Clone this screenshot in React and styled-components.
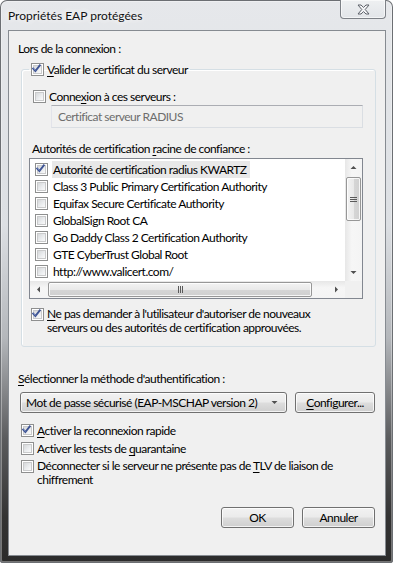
import React from "react";
import styled, { createGlobalStyle } from "styled-components";

const GlobalStyle = createGlobalStyle`
  html, body { margin: 0; padding: 0; background: #ffffff; }
  body {
    font-family: Lato, "Noto Sans", sans-serif;
    font-size: 12px;
    letter-spacing: -0.5px;
    color: #000;
  }
  u { text-decoration: underline; text-underline-offset: 2px; text-decoration-thickness: 1px; }
`;

// Window frame
const Window = styled.div`
  width: 393px;
  height: 563px;
  box-sizing: border-box;
  padding: 0 7px 7px 8px;
  border-radius: 7px 7px 3px 3px;
  background: linear-gradient(to bottom, #e6e8eb 0%, #dcdfe3 40%, #b4b7bb 60%, #5a5b5d 78%, #333 92%, #2b2b2b 100%);
  box-shadow: inset 0 0 0 1px #6c6f73, inset 0 0 0 2px rgba(255,255,255,0.35);
  display: flex;
  flex-direction: column;
`;

const TitleBar = styled.div`
  height: 30px;
  display: flex;
  align-items: flex-start;
`;

const Title = styled.div`
  padding-top: 8px;
  line-height: 15px;
  letter-spacing: 0;
  color: #111;
  text-shadow: 0 0 6px rgba(255,255,255,0.95), 0 0 10px rgba(255,255,255,0.8);
`;

const CloseButton = styled.div`
  margin-left: auto;
  width: 46px;
  height: 19px;
  box-sizing: border-box;
  border: 1px solid #7d8187;
  border-top: none;
  border-radius: 0 0 4px 4px;
  background: linear-gradient(to bottom, #eef0f2, #e2e5e9);
  box-shadow: inset 0 0 0 1px rgba(255,255,255,0.6);
  display: flex;
  align-items: center;
  justify-content: center;
`;

const Client = styled.div`
  flex: 1;
  background: #f0f0f0;
  border: 1px solid #868b91;
  display: flex;
  flex-direction: column;
`;

const Label = styled.div`
  line-height: 15px;
  margin: ${(p) => p.$m || "0"};
  white-space: nowrap;
`;

// Group box
const Group = styled.fieldset`
  margin: 6px 9px 0 12px;
  padding: 0 0 11px 0;
  border: 1px solid #d5dfe5;
  border-radius: 3px;
  box-shadow: inset 1px 1px 0 #fff;
  min-width: 0;
`;

const Legend = styled.legend`
  margin-left: 7px;
  padding: 0 2px;
`;

const CheckRow = styled.label`
  display: flex;
  align-items: ${(p) => (p.$multi ? "flex-start" : "center")};
  gap: 3px;
  line-height: ${(p) => (p.$multi ? "14px" : "15px")};
  margin: ${(p) => p.$m || "0"};
  white-space: nowrap;
`;

const Box = styled.span`
  flex: none;
  width: 13px;
  height: 13px;
  box-sizing: border-box;
  border: 1px solid #8e8f8f;
  background: #fff;
  padding: 1px;
  display: inline-flex;
  margin-top: ${(p) => (p.$multi ? "1px" : "0")};
  span {
    flex: 1;
    border: 1px solid #c9cacb;
    background: linear-gradient(135deg, #d6d8da 0%, #eceef0 60%, #fafafa 100%);
    position: relative;
  }
  svg { position: absolute; left: -3px; top: -3px; }
`;

const Check = ({ checked, multi }) => (
  <Box $multi={multi}>
    <span>
      {checked && (
        <svg width="11" height="11" viewBox="0 0 11 11">
          <path d="M2.2 5.6 L4.4 8 L8.8 2.3" fill="none" stroke="#3e5494" strokeWidth="1.9" strokeLinecap="square" />
          <path d="M2.5 5.4 L4.4 7.4" fill="none" stroke="#9fb2e3" strokeWidth="0.6" />
        </svg>
      )}
    </span>
  </Box>
);

const TextBox = styled.div`
  margin: 1px 12px 0 29px;
  height: 23px;
  box-sizing: border-box;
  border: 1px solid #dadee3;
  border-top-color: #abadb3;
  border-left-color: #e2e3ea;
  background: #f0f0f0;
  color: #6d6d6d;
  line-height: 21px;
  padding-left: 6px;
`;

// List box
const ListBox = styled.div`
  margin: 2px 12px 0 7px;
  height: 141px;
  box-sizing: border-box;
  border: 1px solid #828790;
  background: #fff;
  display: grid;
  grid-template-columns: 1fr 17px;
  grid-template-rows: 1fr 17px;
  overflow: hidden;
`;

const Rows = styled.div`
  padding: 2px 0 0 5px;
  overflow: hidden;
`;

const Item = styled.div`
  height: 17px;
  display: flex;
  align-items: center;
  gap: 4px;
  white-space: nowrap;
  span.txt {
    padding: 0 3px 0 1px;
    line-height: 17px;
    background: ${(p) => (p.$sel ? "#e8e8e8" : "transparent")};
  }
`;

const VScroll = styled.div`
  display: flex;
  flex-direction: column;
  background: linear-gradient(to right, #e7e7e7, #f6f6f6 40%, #f4f4f4);
`;

const HScroll = styled.div`
  display: flex;
  background: linear-gradient(to bottom, #e7e7e7, #f6f6f6 40%, #f4f4f4);
`;

const Corner = styled.div`
  background: #f0f0f0;
`;

const Arrow = styled.div`
  width: 17px;
  height: 17px;
  flex: none;
  display: flex;
  align-items: center;
  justify-content: center;
`;

const Thumb = styled.div`
  box-sizing: border-box;
  border: 1px solid #979797;
  border-radius: 2px;
  display: flex;
  align-items: center;
  justify-content: center;
  ${(p) =>
    p.$vertical
      ? `width: 15px; height: 44px; margin: 1px 1px 0 1px;
         background: linear-gradient(to right, #f3f3f3, #e9e9e9 50%, #d6d6d6 51%, #d0d0d0);`
      : `height: 15px; width: 264px; margin: 1px 0 1px 1px;
         background: linear-gradient(to bottom, #f3f3f3, #e9e9e9 50%, #d6d6d6 51%, #d0d0d0);`}
  box-shadow: inset 0 0 0 1px rgba(255,255,255,0.8);
`;

const Grip = ({ vertical }) =>
  vertical ? (
    <svg width="7" height="7" viewBox="0 0 7 7">
      <path d="M0 1.5 H7 M0 3.5 H7 M0 5.5 H7" stroke="#5a5a5a" strokeWidth="1" />
    </svg>
  ) : (
    <svg width="7" height="7" viewBox="0 0 7 7">
      <path d="M1.5 0 V7 M3.5 0 V7 M5.5 0 V7" stroke="#5a5a5a" strokeWidth="1" />
    </svg>
  );

const Tri = ({ dir }) => {
  const d = {
    up: "M0.5 4 L3.5 1 L6.5 4 Z",
    down: "M0.5 1 L3.5 4 L6.5 1 Z",
    left: "M4 0.5 L1 3.5 L4 6.5 Z",
    right: "M1 0.5 L4 3.5 L1 6.5 Z",
  }[dir];
  const w = dir === "up" || dir === "down" ? 7 : 5;
  const h = dir === "up" || dir === "down" ? 5 : 7;
  return (
    <svg width={w} height={h} viewBox={`0 0 ${w} ${h}`}>
      <path d={d} fill="#505050" />
    </svg>
  );
};

// Bottom part
const ComboRow = styled.div`
  display: flex;
  align-items: center;
  gap: 8px;
  margin: 6px 10px 0 11px;
`;

const buttonLook = `
  box-sizing: border-box;
  height: 21px;
  border: 1px solid #707070;
  border-radius: 3px;
  background: linear-gradient(to bottom, #f2f2f2 0%, #ebebeb 48%, #dddddd 52%, #cfcfcf 100%);
  box-shadow: inset 0 0 0 1px rgba(255,255,255,0.75);
  line-height: 19px;
  white-space: nowrap;
`;

const Combo = styled.div`
  ${buttonLook}
  width: 268px;
  display: flex;
  align-items: center;
  padding: 0 8px 0 5px;
  span { flex: 1; }
`;

const Button = styled.div`
  ${buttonLook}
  width: ${(p) => p.$w || 73}px;
  text-align: center;
`;

const Footer = styled.div`
  margin: auto 10px 27px 0;
  display: flex;
  justify-content: flex-end;
  gap: 8px;
`;

const authorities = [
  "Autorité de certification radius KWARTZ",
  "Class 3 Public Primary Certification Authority",
  "Equifax Secure Certificate Authority",
  "GlobalSign Root CA",
  "Go Daddy Class 2 Certification Authority",
  "GTE CyberTrust Global Root",
  "http://www.valicert.com/",
];

export default function App() {
  return (
    <>
      <GlobalStyle />
      <Window>
        <TitleBar>
          <Title>Propriétés EAP protégées</Title>
          <CloseButton>
            <svg width="13" height="11" viewBox="0 0 13 11">
              <path
                d="M1 1 H4 L6.5 3.4 L9 1 H12 L8.2 5.5 L12 10 H9 L6.5 7.6 L4 10 H1 L4.8 5.5 Z"
                fill="#f4f5f7"
                stroke="#5d6169"
                strokeWidth="1"
                strokeLinejoin="round"
              />
            </svg>
          </CloseButton>
        </TitleBar>
        <Client>
          <Label $m="10px 0 0 9px">Lors de la connexion :</Label>
          <Group>
            <Legend>
              <CheckRow>
                <Check checked />
                <span><u>V</u>alider le certificat du serveur</span>
              </CheckRow>
            </Legend>
            <CheckRow $m="12px 0 0 11px">
              <Check />
              <span>Conne<u>x</u>ion à ces serveurs :</span>
            </CheckRow>
            <TextBox>Certificat serveur RADIUS</TextBox>
            <Label $m="13px 0 0 10px">
              Autorités de certification <u>r</u>acine de confiance :
            </Label>
            <ListBox>
              <Rows>
                {authorities.map((a, i) => (
                  <Item key={a} $sel={i === 0}>
                    <Check checked={i === 0} />
                    <span className="txt">{a}</span>
                  </Item>
                ))}
              </Rows>
              <VScroll>
                <Arrow><Tri dir="up" /></Arrow>
                <Thumb $vertical><Grip vertical /></Thumb>
                <div style={{ flex: 1 }} />
                <Arrow><Tri dir="down" /></Arrow>
              </VScroll>
              <HScroll>
                <Arrow><Tri dir="left" /></Arrow>
                <Thumb><Grip /></Thumb>
                <div style={{ flex: 1 }} />
                <Arrow><Tri dir="right" /></Arrow>
              </HScroll>
              <Corner />
            </ListBox>
            <CheckRow $multi $m="8px 0 0 9px">
              <Check checked multi />
              <span>
                <u>N</u>e pas demander à l'utilisateur d'autoriser de nouveaux
                <br />
                serveurs ou des autorités de certification approuvées.
              </span>
            </CheckRow>
          </Group>
          <Label $m="24px 0 0 9px">
            <u>S</u>électionner la méthode d'authentification :
          </Label>
          <ComboRow>
            <Combo>
              <span>Mot de passe sécurisé (EAP-MSCHAP version 2)</span>
              <Tri dir="down" />
            </Combo>
            <Button $w={80}>
              <u>C</u>onfigurer...
            </Button>
          </ComboRow>
          <CheckRow $m="10px 0 0 12px">
            <Check checked />
            <span><u>A</u>ctiver la reconnexion rapide</span>
          </CheckRow>
          <CheckRow $m="3px 0 0 12px">
            <Check />
            <span>Activer les tests de <u>q</u>uarantaine</span>
          </CheckRow>
          <CheckRow $multi $m="3px 0 0 12px">
            <Check multi />
            <span>
              Déconnecter si le serveur ne présente pas de <u>T</u>LV de liaison de
              <br />
              chiffrement
            </span>
          </CheckRow>
          <Footer>
            <Button>OK</Button>
            <Button>Annuler</Button>
          </Footer>
        </Client>
      </Window>
    </>
  );
}
